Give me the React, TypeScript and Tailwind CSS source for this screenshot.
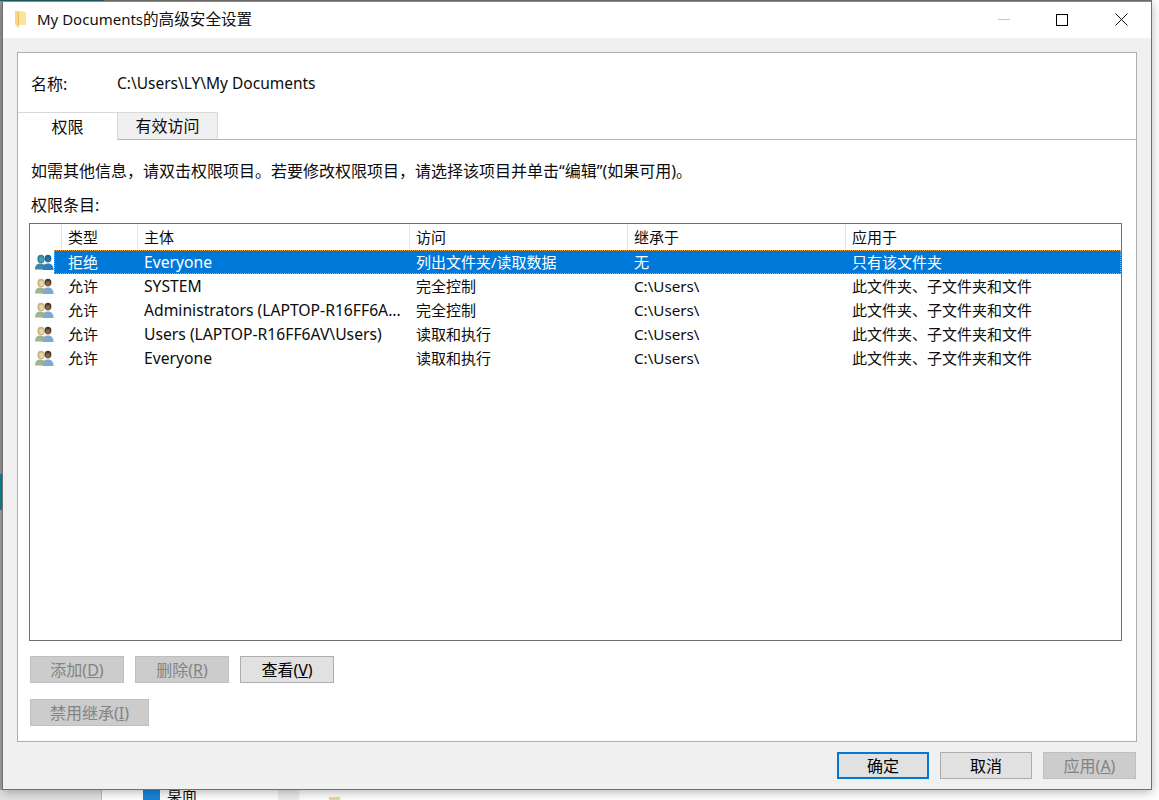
const font = "font-['Noto_Sans','Noto_Sans_CJK_SC',sans-serif]";

const rows = [
  { type: "拒绝", who: "Everyone", access: "列出文件夹/读取数据", from: "无", to: "只有该文件夹", deny: true },
  { type: "允许", who: "SYSTEM", access: "完全控制", from: "C:\\Users\\", to: "此文件夹、子文件夹和文件" },
  { type: "允许", who: "Administrators (LAPTOP-R16FF6A...", access: "完全控制", from: "C:\\Users\\", to: "此文件夹、子文件夹和文件" },
  { type: "允许", who: "Users (LAPTOP-R16FF6AV\\Users)", access: "读取和执行", from: "C:\\Users\\", to: "此文件夹、子文件夹和文件" },
  { type: "允许", who: "Everyone", access: "读取和执行", from: "C:\\Users\\", to: "此文件夹、子文件夹和文件" },
];

function UsersIcon({ deny }: { deny?: boolean }) {
  return (
    <svg width="19" height="17" viewBox="0 0 19 17" className="shrink-0">
      <ellipse cx="6" cy="5" rx="3.6" ry="4.2" fill={deny ? "#2f7f96" : "#c9b078"} />
      <ellipse cx="6.3" cy="5.4" rx="2.2" ry="2.8" fill={deny ? "#4f9bb0" : "#e8d3b0"} />
      <path d="M0 15.5c0-4 2-6 5.500-6s5.500 2 5.500 6z" fill={deny ? "#3d8ba0" : "#9fb488"} />
      <ellipse cx="13" cy="4.600" rx="3.400" ry="3.800" fill={deny ? "#1f5f8f" : "#4a3425"} />
      <ellipse cx="13" cy="5.600" rx="2.300" ry="2.600" fill={deny ? "#2a6fa5" : "#8a6045"} />
      <path d="M7.500 16c0-4 1.800-6.500 5.500-6.500s5.500 2.500 5.500 6.500z" fill={deny ? "#2c7cc0" : "#83a8d0"} />
    </svg>
  );
}

function Btn({ label, state }: { label: React.ReactNode; state?: "off" | "focus" }) {
  const look =
    state === "off"
      ? "bg-[#cccccc] border border-[#bfbfbf] text-[#838383]"
      : state === "focus"
        ? "bg-[#e1e1e1] border-2 border-[#0078d7] text-black"
        : "bg-[#e1e1e1] border border-[#adadad] text-black";
  return <div className={`h-[27px] flex items-center justify-center text-[16px] leading-none ${look}`}>{label}</div>;
}

export default function App() {
  return (
    <div className={`${font} w-[1159px] h-[800px] overflow-hidden bg-white text-[15px] text-[#0c0c0c] flex flex-col`}>
      {/* desktop showing behind the dialog, top edge */}
      <div className="h-px shrink-0 flex">
        <div className="w-[104px] bg-[#1f5f6b]" />
        <div className="flex-1 bg-[#77746f]" />
        <div className="w-[7px] bg-white" />
      </div>
      <div className="h-[789px] shrink-0 flex">
        <div className="w-[2px] shrink-0 flex flex-col">
          <div className="h-[473px] bg-[#9a9a9a]" />
          <div className="h-[36px] bg-[#0f8a94]" />
          <div className="flex-1 bg-[#a8a8a8]" />
        </div>
        <div className="relative z-10 w-[1150px] h-[789px] shrink-0 border border-[#6f6f6f] border-t-[#8a8a8a] bg-[#f0f0f0] flex flex-col shadow-[0_2px_10px_rgba(0,0,0,0.3)]">
          <div className="h-[36px] pb-px bg-white flex items-center shrink-0">
            <svg width="12" height="17" viewBox="0 0 12 17" className="ml-[12px] mr-[10px]">
              <path d="M0 0h4v17L1.500 15 0 13z" fill="#f3d98a" />
              <path d="M3 1h1.500V0H8v1h3v13H4z" fill="#fbe39a" />
              <path d="M3.500 1v13" stroke="#e0bd62" />
            </svg>
            <span className="text-[15px] text-[#111]">My Documents<span className="text-[15.6px]">的高级安全设置</span></span>
            <div className="ml-auto flex items-center">
              <div className="w-[12px] h-px bg-[#c4c4c4] mr-[46px]" />
              <div className="w-[12px] h-[12px] border border-black mr-[47px]" />
              <svg width="13" height="13" viewBox="0 0 13 13" className="mr-[23px]">
                <path d="M.5.5l12 12M12.5.5l-12 12" stroke="#111" fill="none" />
              </svg>
            </div>
          </div>
          <div className="pl-[14px] pt-[14px] flex flex-col">
            <div className="h-[690px] w-[1120px] bg-white border border-[#adadad] flex flex-col">
              <div className="h-[59px] shrink-0 flex items-center pl-[13px] pt-[3px]">
                <span className="w-[86px] text-[16px]">名称:</span>
                <span className="text-[15.5px]">C:\Users\LY\My Documents</span>
              </div>
              <div className="h-[28px] shrink-0 flex border-b border-[#b4b4b4] text-[16px]">
                <div className="w-[100px] h-[28px] bg-white border-t border-r border-[#d9d9d9] flex items-center justify-center">权限</div>
                <div className="w-[100px] h-[27px] bg-[#f0f0f0] border-t border-r border-[#d9d9d9] flex items-center justify-center">有效访问</div>
              </div>
              <div className="pl-[13px] pt-[18px] h-[43px] shrink-0 flex items-center leading-none text-[16px]">如需其他信息，请双击权限项目。若要修改权限项目，请选择该项目并单击“编辑”(如果可用)。</div>
              <div className="pl-[13px] pt-[10px] h-[34px] shrink-0 flex items-center leading-none text-[16px]">权限条目:</div>
              <div className="mt-[6px] ml-[11px] w-[1093px] h-[418px] border border-[#6f6f6f] bg-white flex flex-col shrink-0">
                <div className="h-[26px] shrink-0 flex">
                  <div className="w-[32px] border-r border-[#e5e5e5]" />
                  <div className="w-[76px] pl-[6px] border-r border-[#e5e5e5] flex items-center">类型</div>
                  <div className="w-[272px] pl-[6px] border-r border-[#e5e5e5] flex items-center">主体</div>
                  <div className="w-[218px] pl-[6px] border-r border-[#e5e5e5] flex items-center">访问</div>
                  <div className="w-[218px] pl-[6px] border-r border-[#e5e5e5] flex items-center">继承于</div>
                  <div className="flex-1 pl-[6px] flex items-center">应用于</div>
                </div>
                {rows.map((r) => (
                  <div key={r.who + r.access} className="h-[24px] shrink-0 flex items-center">
                    <div className="w-[24px] pl-[5px] flex items-center"><UsersIcon deny={r.deny} /></div>
                    <div className={`flex-1 h-full flex items-center ${r.deny ? "bg-[#0078d7] text-white outline-1 outline-dotted -outline-offset-1 outline-[#f0a040]" : ""}`}>
                      <span className="w-[84px] pl-[14px] shrink-0">{r.type}</span>
                      <span className="w-[272px] pl-[6px] pt-px shrink-0 whitespace-nowrap text-[15.7px]">{r.who}</span>
                      <span className="w-[218px] pl-[6px] shrink-0">{r.access}</span>
                      <span className="w-[218px] pl-[6px] shrink-0 text-[15.2px]">{r.from}</span>
                      <span className="pl-[6px]">{r.to}</span>
                    </div>
                  </div>
                ))}
              </div>
              <div className="ml-[12px] mt-[15px] flex gap-[11px]">
                <div className="w-[94px]"><Btn state="off" label={<>添加(<u>D</u>)</>} /></div>
                <div className="w-[94px]"><Btn state="off" label={<>删除(<u>R</u>)</>} /></div>
                <div className="w-[94px]"><Btn label={<>查看(<u>V</u>)</>} /></div>
              </div>
              <div className="ml-[12px] mt-[16px] w-[119px]"><Btn state="off" label={<>禁用继承(<u>I</u>)</>} /></div>
            </div>
            <div className="flex justify-end gap-[11px] mt-[10px] w-[1119px]">
              <div className="w-[92px]"><Btn state="focus" label="确定" /></div>
              <div className="w-[92px]"><Btn label="取消" /></div>
              <div className="w-[93px]"><Btn state="off" label={<>应用(<u>A</u>)</>} /></div>
            </div>
          </div>
        </div>
      </div>
      {/* explorer window peeking out under the dialog */}
      <div className="h-[10px] shrink-0 flex overflow-hidden">
        <div className="w-[102px] bg-[#e2e2e2] border-r border-[#bdbdbd] shrink-0" />
        <div className="w-[176px] bg-white shrink-0 flex pl-[41px]">
          <div className="w-[17px] h-[10px] bg-[#1a86d8] mr-[7px] shrink-0" />
          <span className="text-[15px] leading-none -mt-[3px] whitespace-nowrap">桌面</span>
        </div>
        <div className="w-[20px] bg-[#ececec] shrink-0" />
        <div className="w-[2px] bg-[#f4f4f4] shrink-0" />
        <div className="flex-1 bg-white pl-[29px]">
          <div className="w-[11px] h-[3px] mt-[7px] bg-[#f0d78c]" />
        </div>
      </div>
    </div>
  );
}
